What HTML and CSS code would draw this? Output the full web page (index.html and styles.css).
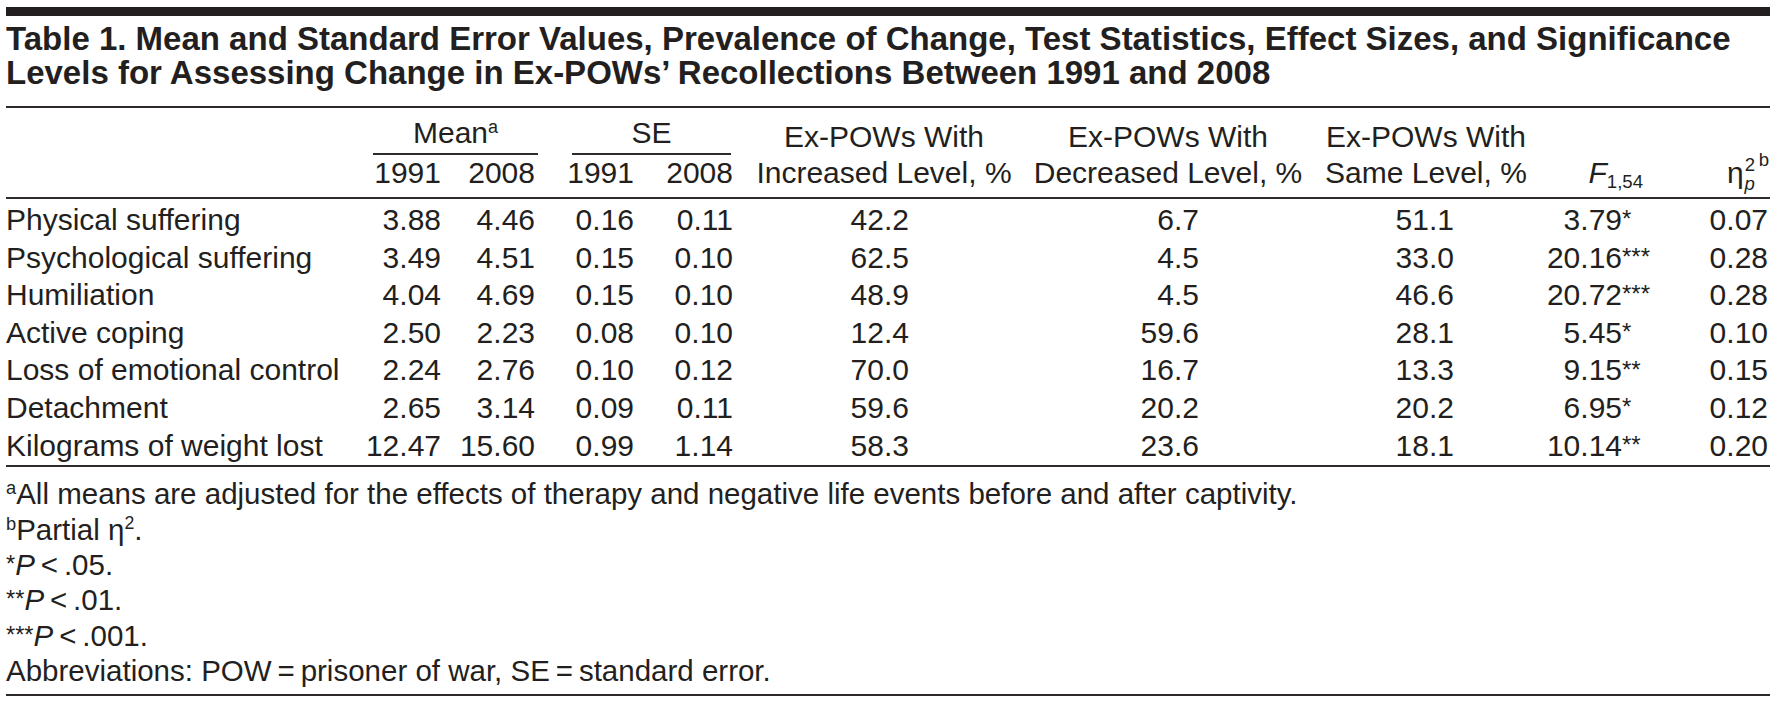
FILE: index.html
```html
<!DOCTYPE html>
<html lang="en">
<head>
<meta charset="utf-8">
<title>Table 1</title>
<link rel="stylesheet" href="styles.css">
</head>
<body>
<div class="figure">
  <h1 class="title">Table 1. Mean and Standard Error Values, Prevalence of Change, Test Statistics, Effect Sizes, and Significance<br>Levels for Assessing Change in Ex-POWs’ Recollections Between 1991 and 2008</h1>
  <table class="data">
    <colgroup>
      <col class="c-label"><col class="c-m1"><col class="c-m2"><col class="c-s1"><col class="c-s2"><col class="c-inc"><col class="c-dec"><col class="c-same"><col class="c-f"><col class="c-eta">
    </colgroup>
    <thead>
      <tr class="hr1">
        <th rowspan="2" class="lab"></th>
        <th colspan="2" class="group"><div class="gl">Mean<sup class="hs">a</sup></div></th>
        <th colspan="2" class="group"><div class="gl">SE</div></th>
        <th rowspan="2" class="multi">Ex-POWs With<br>Increased Level, %</th>
        <th rowspan="2" class="multi">Ex-POWs With<br>Decreased Level, %</th>
        <th rowspan="2" class="multi">Ex-POWs With<br>Same Level, %</th>
        <th rowspan="2" class="fh"><i>F</i><sub class="fs">1,54</sub></th>
        <th rowspan="2" class="eh">η<span class="e2">2</span><span class="ep"><i>p</i></span><span class="eb">b</span></th>
      </tr>
      <tr class="hr2">
        <th class="yr m1">1991</th>
        <th class="yr m2">2008</th>
        <th class="yr s1">1991</th>
        <th class="yr s2">2008</th>
      </tr>
    </thead>
    <tbody>
      <tr><td class="lab">Physical suffering</td><td class="m1">3.88</td><td class="m2">4.46</td><td class="s1">0.16</td><td class="s2">0.11</td><td class="inc">42.2</td><td class="dec">6.7</td><td class="same">51.1</td><td class="f">3.79<span class="sig">*</span></td><td class="eta">0.07</td></tr>
      <tr><td class="lab">Psychological suffering</td><td class="m1">3.49</td><td class="m2">4.51</td><td class="s1">0.15</td><td class="s2">0.10</td><td class="inc">62.5</td><td class="dec">4.5</td><td class="same">33.0</td><td class="f">20.16<span class="sig">***</span></td><td class="eta">0.28</td></tr>
      <tr><td class="lab">Humiliation</td><td class="m1">4.04</td><td class="m2">4.69</td><td class="s1">0.15</td><td class="s2">0.10</td><td class="inc">48.9</td><td class="dec">4.5</td><td class="same">46.6</td><td class="f">20.72<span class="sig">***</span></td><td class="eta">0.28</td></tr>
      <tr><td class="lab">Active coping</td><td class="m1">2.50</td><td class="m2">2.23</td><td class="s1">0.08</td><td class="s2">0.10</td><td class="inc">12.4</td><td class="dec">59.6</td><td class="same">28.1</td><td class="f">5.45<span class="sig">*</span></td><td class="eta">0.10</td></tr>
      <tr><td class="lab">Loss of emotional control</td><td class="m1">2.24</td><td class="m2">2.76</td><td class="s1">0.10</td><td class="s2">0.12</td><td class="inc">70.0</td><td class="dec">16.7</td><td class="same">13.3</td><td class="f">9.15<span class="sig">**</span></td><td class="eta">0.15</td></tr>
      <tr><td class="lab">Detachment</td><td class="m1">2.65</td><td class="m2">3.14</td><td class="s1">0.09</td><td class="s2">0.11</td><td class="inc">59.6</td><td class="dec">20.2</td><td class="same">20.2</td><td class="f">6.95<span class="sig">*</span></td><td class="eta">0.12</td></tr>
      <tr><td class="lab">Kilograms of weight lost</td><td class="m1">12.47</td><td class="m2">15.60</td><td class="s1">0.99</td><td class="s2">1.14</td><td class="inc">58.3</td><td class="dec">23.6</td><td class="same">18.1</td><td class="f">10.14<span class="sig">**</span></td><td class="eta">0.20</td></tr>
    </tbody>
  </table>
  <div class="notes">
    <p class="note"><sup class="ns">a</sup>All means are adjusted for the effects of therapy and negative life events before and after captivity.</p>
    <p class="note"><sup class="ns">b</sup>Partial η<sup class="ns2">2</sup>.</p>
    <p class="note"><span class="ast">*</span><i>P</i>&thinsp;&lt;&thinsp;.05.</p>
    <p class="note"><span class="ast">**</span><i>P</i>&thinsp;&lt;&thinsp;.01.</p>
    <p class="note"><span class="ast">***</span><i>P</i>&thinsp;&lt;&thinsp;.001.</p>
    <p class="note">Abbreviations: POW&thinsp;=&thinsp;prisoner of war, SE&thinsp;=&thinsp;standard error.</p>
  </div>
</div>
</body>
</html>
```

FILE: styles.css
```css
html, body {
  margin: 0;
  padding: 0;
  background: #ffffff;
}

body {
  font-family: "Liberation Sans", Arial, sans-serif;
  color: #231f20;
}

.figure {
  width: 1764px;
  margin: 7px 0 0 6px;
  border-top: 9px solid #231f20;
}

.title {
  margin: 0;
  padding: 6px 0 16px 0;
  font-size: 33px;
  line-height: 34px;
  font-weight: bold;
  letter-spacing: 0;
  white-space: nowrap;
}

.data {
  width: 1764px;
  table-layout: fixed;
  border-collapse: collapse;
  border-top: 2px solid #2e2a2b;
  font-size: 30px;
}

.c-label { width: 350px; }
.c-m1 { width: 99px; }
.c-m2 { width: 100px; }
.c-s1 { width: 95px; }
.c-s2 { width: 98px; }
.c-inc { width: 272px; }
.c-dec { width: 296px; }
.c-same { width: 220px; }
.c-f { width: 154px; }
.c-eta { width: 80px; }

.data th {
  font-weight: normal;
  padding: 0;
}

.data thead {
  border-bottom: 2px solid #2e2a2b;
}

.data tbody {
  border-bottom: 2px solid #2e2a2b;
}

.hr1 th {
  line-height: 36px;
  vertical-align: top;
}

.data th.group {
  padding-top: 7px;
  text-align: center;
}

.gl {
  margin: 0 17px;
  padding-bottom: 2px;
  border-bottom: 2px solid #2e2a2b;
}

.hs {
  font-size: 0.6em;
  line-height: 0;
  vertical-align: 0.55em;
}

.hr1 th.multi,
.hr1 th.fh,
.hr1 th.eh {
  vertical-align: bottom;
  padding-bottom: 6px;
  text-align: center;
}

.hr1 th.fh {
  text-align: right;
  padding-right: 47px;
}

.hr1 th.eh {
  text-align: right;
  padding-right: 1px;
}

.fh i {
  font-style: italic;
}

.fs {
  font-size: 0.62em;
  line-height: 0;
  vertical-align: -0.25em;
}

.e2,
.ep,
.eb {
  font-size: 0.62em;
  line-height: 0;
}

.e2 {
  vertical-align: 0.62em;
  margin-left: 1px;
}

.ep {
  vertical-align: -0.35em;
  margin-left: -0.56em;
}

.eb {
  vertical-align: 0.9em;
  margin-left: 0.2em;
}

.hr2 th {
  line-height: 36px;
  padding-bottom: 6px;
  text-align: right;
}

.data td {
  padding: 0;
  line-height: 37.6px;
  text-align: right;
  white-space: nowrap;
}

.data tbody tr:first-child td {
  padding-top: 2px;
}

.data tbody tr:last-child td {
  padding-bottom: 1px;
}

.data td.lab {
  text-align: left;
}

.data .m1 { padding-right: 14px; }
.data .m2 { padding-right: 20px; }
.data .s1 { padding-right: 16px; }
.data .s2 { padding-right: 15px; }
.data .inc { padding-right: 111px; }
.data .dec { padding-right: 117px; }
.data .same { padding-right: 82px; }
.data td.f { padding-right: 20px; }
.data td.eta { padding-right: 2px; }

.sig {
  display: inline-block;
  width: 48px;
  text-align: left;
  font-size: 0.8em;
  line-height: 0;
  vertical-align: 0.12em;
}

.notes {
  padding: 9px 0 5px 0;
  border-bottom: 2px solid #2e2a2b;
  font-size: 29.5px;
  line-height: 35.4px;
}

.note {
  margin: 0;
  white-space: nowrap;
}

.ns {
  font-size: 0.62em;
  line-height: 0;
  vertical-align: 0.55em;
}

.ns2 {
  font-size: 0.6em;
  line-height: 0;
  vertical-align: 0.6em;
}

.ast {
  font-size: 0.8em;
  line-height: 0;
  vertical-align: 0.12em;
}

.note i {
  font-style: italic;
}
```
